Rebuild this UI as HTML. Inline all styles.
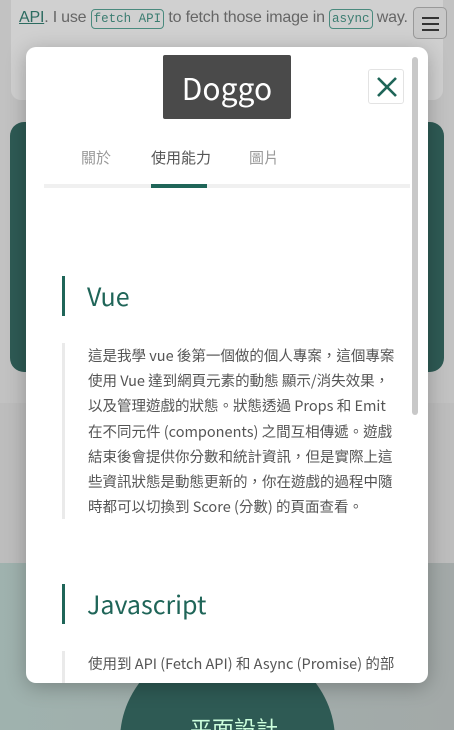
<!DOCTYPE html>
<html style="overflow:hidden;height:730px"><head><meta charset="utf-8"><style>
*{margin:0;padding:0;box-sizing:border-box}
body{width:454px;height:730px;overflow:hidden;position:relative;background:#bdbdbd;font-family:"Liberation Sans","Noto Sans CJK TC",sans-serif}
.top{position:absolute;left:0;top:0;width:454px;height:403px;background:#c2c2c2}
.card{position:absolute;left:11px;top:-10px;width:432px;height:110px;background:#d0d0d0;border-radius:10px}
.line1{position:absolute;left:19px;top:9px;font-size:16px;color:#666;white-space:nowrap;letter-spacing:-0.2px}
.line1 u{color:#2c6b60}
.code{display:inline-block;border:1px solid #4a8a7e;border-radius:4px;font-family:"Liberation Mono",monospace;font-size:12.5px;color:#3a7c70;padding:0 2px;line-height:18px;letter-spacing:0}
.ham{position:absolute;left:413px;top:7px;width:34px;height:32px;border:1px solid #999;border-radius:5px;background:#c8c8c8}
.ham i{position:absolute;left:8px;width:17px;height:2px;background:#333}
.green{position:absolute;left:10px;top:122px;width:434px;height:250px;background:#2e5a54;border-radius:14px}
.bot{position:absolute;left:0;top:563px;width:454px;height:167px;background:linear-gradient(90deg,#9fb2ae,#a3a9a8);overflow:hidden}
.circ{position:absolute;left:120px;top:77px;width:215px;height:200px;border-radius:50%;background:#2e5a54}
.modal{position:absolute;left:26px;top:47px;width:402px;height:636px;background:#fff;border-radius:10px;overflow:hidden;box-shadow:0 4px 20px rgba(0,0,0,.25)}
.title{position:absolute;left:137px;top:8px;width:128px;height:64px;background:#4a4a4a;border-radius:2px;color:#fff;font-size:30px;text-align:center;line-height:64px;font-family:"Noto Sans CJK TC",sans-serif}
.close{position:absolute;left:342px;top:22px;width:36px;height:35px;border:1px solid #e3e3e3;border-radius:3px}
.tabs{position:absolute;top:100px;font-size:15px;color:#999;font-family:"Noto Sans CJK TC",sans-serif}
.tabline{position:absolute;left:18px;top:137px;width:366px;height:4px;background:#f0f0f0}
.tabact{position:absolute;left:125px;top:137px;width:56px;height:4px;background:#1f6558}
.sb{position:absolute;left:386px;top:10px;width:6px;height:358px;background:#c8c8c8;border-radius:3px}
.h{position:absolute;left:36px;border-left:3px solid #1f6558;height:40px;padding-left:22px;font-size:25px;color:#1f6558;line-height:40px;font-family:"Noto Sans CJK TC",sans-serif}
.p{position:absolute;left:36px;border-left:3px solid #eaeaea;padding-left:23px;font-size:14.5px;color:#555;line-height:25.2px;width:340px;font-family:"Noto Sans CJK TC",sans-serif}
</style></head><body>
<div class="top"></div>
<div class="card"></div>
<div class="line1"><u>API</u>. I use <span class="code">fetch API</span> to fetch those image in <span class="code">async</span> way.</div>
<div class="ham"><i style="top:9px"></i><i style="top:15px"></i><i style="top:21px"></i></div>
<div class="green"></div>
<div class="bot"><div class="circ"></div>
<div style="position:absolute;left:190px;top:149px;color:#cfd;font-size:22px">平面設計</div></div>
<div class="modal">
<div class="title">Doggo</div>
<div class="close"><svg width="36" height="35" viewBox="0 0 36 35"><path d="M9 8L27 26M27 8L9 26" stroke="#1f6558" stroke-width="2.6"/></svg></div>
<div class="tabs" style="left:55px">關於</div>
<div class="tabs" style="left:125px;color:#555">使用能力</div>
<div class="tabs" style="left:223px">圖片</div>
<div class="tabline"></div><div class="tabact"></div>
<div class="sb"></div>
<div class="h" style="top:229px">Vue</div>
<div class="p" style="top:296px">這是我學 vue 後第一個做的個人專案，這個專案使用 Vue 達到網頁元素的動態 顯示/消失效果，以及管理遊戲的狀態。狀態透過 Props 和 Emit 在不同元件 (components) 之間互相傳遞。遊戲結束後會提供你分數和統計資訊，但是實際上這些資訊狀態是動態更新的，你在遊戲的過程中隨時都可以切換到 Score (分數) 的頁面查看。</div>
<div class="h" style="top:537px">Javascript</div>
<div class="p" style="top:604px;height:40px">使用到 API (Fetch API) 和 Async (Promise) 的部</div>
</div>
</body></html>
